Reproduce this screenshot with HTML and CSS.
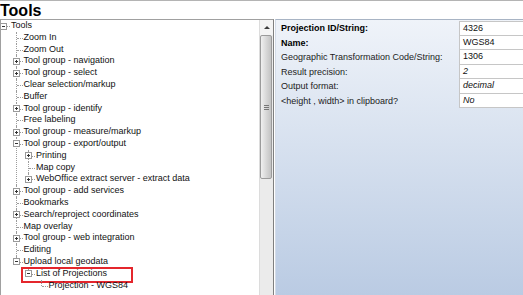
FILE: index.html
```html
<!DOCTYPE html>
<html lang="en">
<head>
  <meta charset="UTF-8">
  <title>Tools</title>
  <link rel="stylesheet" href="styles.css">
</head>
<body>
  <div class="window">
    <div class="title">Tools</div>
    <div class="main">
      <div class="tree-box">
        <div class="tree">
          <ul>
            <li>
              <div class="node"><span class="toggle minus"></span>Tools</div>
              <ul>
                <li><div class="node">Zoom In</div></li>
                <li><div class="node">Zoom Out</div></li>
                <li><div class="node"><span class="toggle"></span>Tool group - navigation</div></li>
                <li><div class="node"><span class="toggle"></span>Tool group - select</div></li>
                <li><div class="node">Clear selection/markup</div></li>
                <li><div class="node">Buffer</div></li>
                <li><div class="node"><span class="toggle"></span>Tool group - identify</div></li>
                <li><div class="node">Free labeling</div></li>
                <li><div class="node"><span class="toggle"></span>Tool group - measure/markup</div></li>
                <li>
                  <div class="node"><span class="toggle minus"></span>Tool group - export/output</div>
                  <ul>
                    <li><div class="node"><span class="toggle"></span>Printing</div></li>
                    <li><div class="node">Map copy</div></li>
                    <li><div class="node"><span class="toggle"></span>WebOffice extract server - extract data</div></li>
                  </ul>
                </li>
                <li><div class="node"><span class="toggle"></span>Tool group - add services</div></li>
                <li><div class="node">Bookmarks</div></li>
                <li><div class="node"><span class="toggle"></span>Search/reproject coordinates</div></li>
                <li><div class="node">Map overlay</div></li>
                <li><div class="node"><span class="toggle"></span>Tool group - web integration</div></li>
                <li><div class="node">Editing</div></li>
                <li>
                  <div class="node"><span class="toggle minus"></span>Upload local geodata</div>
                  <ul>
                    <li>
                      <div class="node"><span class="toggle minus"></span>List of Projections<span class="mark"></span></div>
                      <ul>
                        <li><div class="node">Projection - WGS84</div></li>
                      </ul>
                    </li>
                  </ul>
                </li>
              </ul>
            </li>
          </ul>
        </div>
        <div class="scrollbar">
          <div class="sb-btn"><span class="arrow"></span></div>
          <div class="sb-thumb"><span class="grip"></span></div>
          <div class="sb-track"></div>
        </div>
      </div>

      <div class="props">
        <div class="prop-grid">
          <div class="key strong">Projection ID/String:</div>
          <div class="val first">4326</div>
          <div class="key strong">Name:</div>
          <div class="val">WGS84</div>
          <div class="key">Geographic Transformation Code/String:</div>
          <div class="val">1306</div>
          <div class="key">Result precision:</div>
          <div class="val italic">2</div>
          <div class="key">Output format:</div>
          <div class="val italic">decimal</div>
          <div class="key">&lt;height , width&gt; in clipboard?</div>
          <div class="val italic">No</div>
        </div>
      </div>
    </div>
  </div>
</body>
</html>
```

FILE: styles.css
```css
* {
  box-sizing: border-box;
}

body {
  margin: 0;
  font-family: 'Liberation Sans', Arial, sans-serif;
  background: #fff;
  color: #1a1a1a;
}

.window {
  width: 523px;
  height: 295px;
  overflow: hidden;
  border-top: 1px solid #b4b4b4;
}

.title {
  height: 18px;
  font-size: 16px;
  font-weight: bold;
  line-height: 19px;
  color: #000;
}

.main {
  display: flex;
  height: 276px;
}

/* tree */

.tree-box {
  width: 274px;
  display: flex;
  border-top: 1px solid #a0a0a0;
  border-left: 1px solid #a0a0a0;
  border-right: 1px solid #7f7f7f;
  background: #fff;
}

.tree {
  flex: 1;
  overflow: hidden;
  font-size: 9px;
  color: #111;
}

.tree ul {
  list-style: none;
  margin: 0;
  padding: 0 0 0 12.5px;
}

.tree > ul {
  padding-left: 0;
}

.tree li {
  position: relative;
}

.tree ul ul > li::before {
  content: '';
  position: absolute;
  left: 2px;
  top: 0;
  bottom: 0;
  border-left: 1px dotted #9c9c9c;
}

.tree ul ul > li:last-child::before {
  bottom: auto;
  height: 6px;
}

.node {
  position: relative;
  height: 11.8px;
  line-height: 11.8px;
  padding-left: 10px;
  white-space: nowrap;
}

.node::before {
  content: '';
  position: absolute;
  left: 3px;
  top: 6px;
  width: 6px;
  border-top: 1px dotted #9c9c9c;
}

.toggle {
  position: absolute;
  left: -1px;
  top: 2.5px;
  width: 7px;
  height: 7px;
  border: 1px solid #9a9a9a;
  background: #fff;
  z-index: 1;
}

.toggle::before,
.toggle::after {
  content: '';
  position: absolute;
  background: #333;
}

.toggle::before {
  left: 1px;
  top: 2px;
  width: 3px;
  height: 1px;
}

.toggle::after {
  left: 2px;
  top: 1px;
  width: 1px;
  height: 3px;
}

.toggle.minus::after {
  display: none;
}

.mark {
  position: absolute;
  left: -5px;
  top: -1px;
  width: 112px;
  height: 16px;
  border: 2px solid #e4262c;
}

/* scrollbar */

.scrollbar {
  width: 14px;
  display: flex;
  flex-direction: column;
  border-left: 1px solid #dcdcdc;
  background: #ebebeb;
}

.sb-btn {
  height: 15px;
  display: flex;
  justify-content: center;
  align-items: center;
  background: #f4f4f4;
}

.arrow {
  width: 0;
  height: 0;
  border-left: 3px solid transparent;
  border-right: 3px solid transparent;
  border-bottom: 3px solid #3c3c3c;
}

.sb-thumb {
  height: 144px;
  margin: 0 1px 0 0;
  border: 1px solid #9b9b9b;
  border-radius: 2px;
  background: linear-gradient(to right, #f0f0f0, #d9d9d9 50%, #c3c3c3);
  display: flex;
  justify-content: center;
  align-items: center;
}

.grip {
  width: 5px;
  height: 5px;
  border-top: 1px solid #777;
  border-bottom: 1px solid #777;
  position: relative;
}

.grip::after {
  content: '';
  position: absolute;
  left: 0;
  right: 0;
  top: 1px;
  border-top: 1px solid #777;
}

.sb-track {
  flex: 1;
  background: #ebebeb;
}

/* properties */

.props {
  flex: 1;
  margin-left: 1px;
  overflow: hidden;
  border-top: 1px solid #a8b4c4;
  border-left: 1px solid #d4dce8;
  background: linear-gradient(#eff3f9, #bacbe3);
  padding: 1px 0 0 5px;
}

.prop-grid {
  display: grid;
  grid-template-columns: 178px 80px;
  grid-auto-rows: 14.5px;
  font-size: 9px;
}

.key {
  line-height: 14.5px;
  white-space: nowrap;
  color: #222;
}

.key.strong {
  font-weight: bold;
  color: #000;
}

.val {
  background: #fff;
  border: 1px solid #c6c6c6;
  border-top: none;
  padding-left: 3px;
  line-height: 13.5px;
  color: #111;
}

.val.first {
  border-top: 1px solid #c6c6c6;
  line-height: 12.5px;
}

.val.italic {
  font-style: italic;
}
```
